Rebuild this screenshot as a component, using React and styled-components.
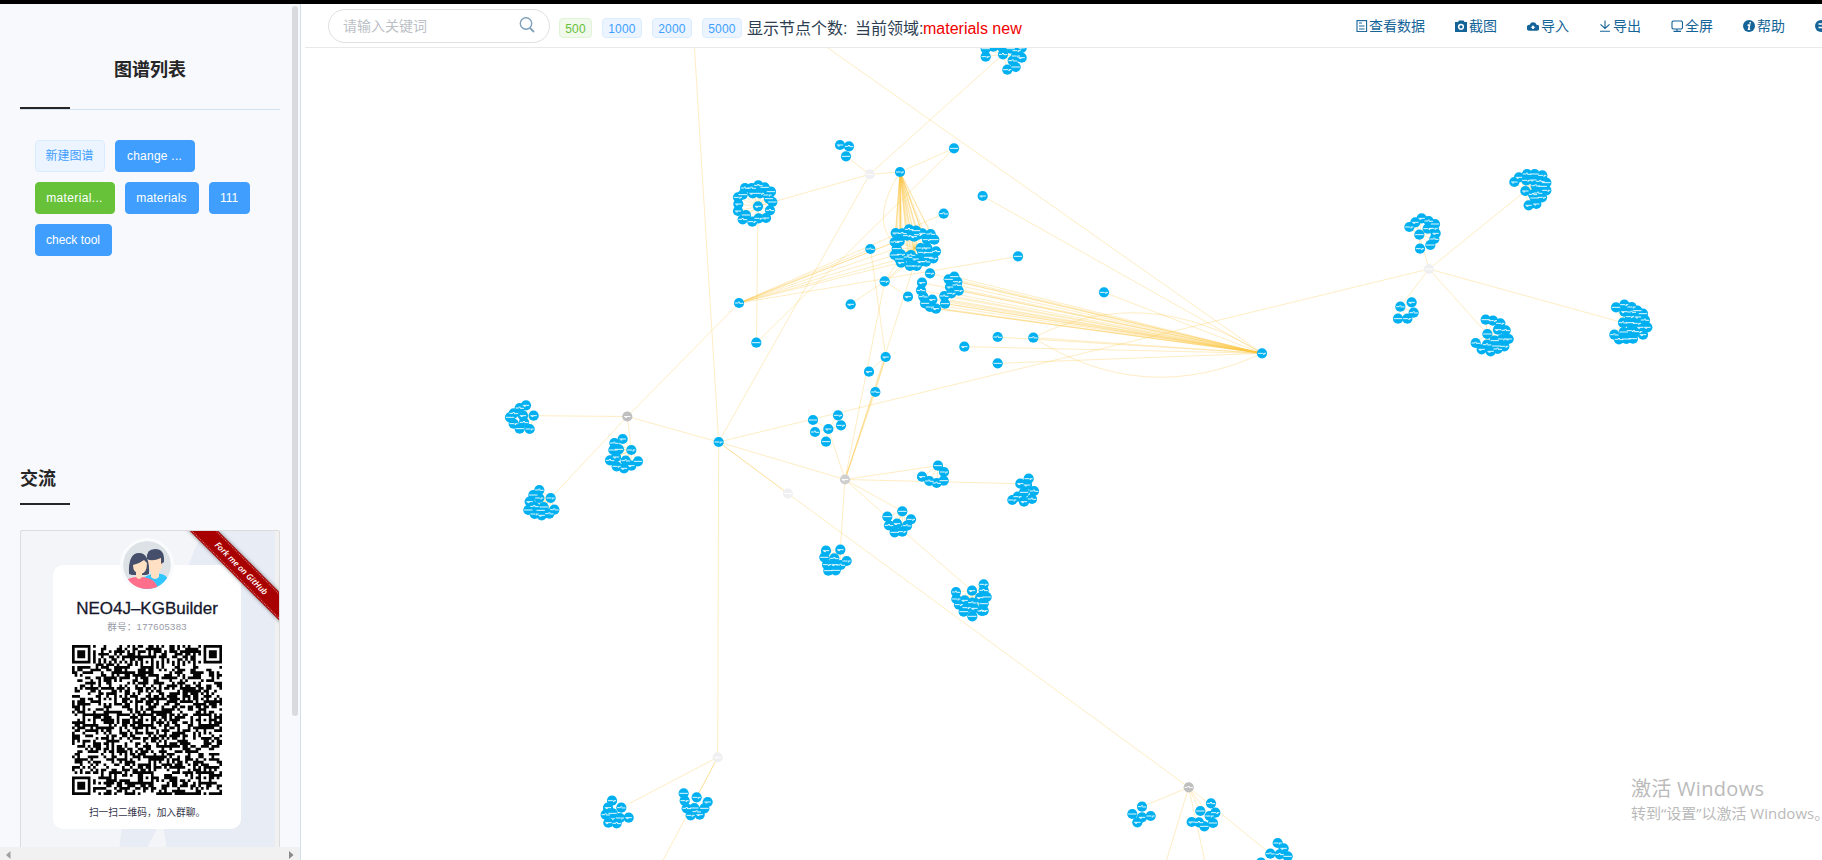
import React from 'react';
import styled, { createGlobalStyle } from 'styled-components';

const Global = createGlobalStyle`
  * { box-sizing: border-box; }
  body { margin: 0; overflow: hidden; background: #fff; font-family: "Liberation Sans", "Noto Sans CJK SC", sans-serif; }
`;

const Page = styled.div`
  display: flex;
  width: 1822px;
  height: 860px;
  border-top: 4px solid #000;
  overflow: hidden;
`;
const Sidebar = styled.aside`
  position: relative;
  flex: 0 0 301px;
  height: 856px;
  border-right: 1px solid #cfdfec;
  background: #f8f9fd;
  overflow: hidden;
`;
const SideContent = styled.div`
  width: 260px;
  margin-left: 20px;
`;
const ListTitle = styled.h2`
  margin: 0;
  height: 106px;
  padding: 52px 0 0;
  border-bottom: 1px solid #d3e2ec;
  text-align: center;
  font-size: 18px;
  line-height: 28px;
  font-weight: 700;
  color: #262626;
`;
const Accent = styled.div`
  width: 50px;
  height: 2px;
  background: #262626;
  margin-top: ${p => p.$lift ? '-3px' : '0'};
  position: relative;
`;
const Domains = styled.div`
  display: flex;
  flex-wrap: wrap;
  align-content: flex-start;
  gap: 10px;
  height: 321px;
  padding: 31px 15px 0;
`;
const tones = {
  plain: ['#ecf5ff', '#d9ecff', '#409eff'],
  blue: ['#409eff', '#409eff', '#fff'],
  green: ['#67c23a', '#67c23a', '#fff'],
  lime: ['#f0f9eb', '#e1f3d8', '#67c23a'],
};
const DomainButton = styled.button`
  width: ${p => p.$w}px;
  height: 32px;
  padding: 0 1px 0 0;
  border: 1px solid ${p => tones[p.$tone][1]};
  border-radius: 4px;
  background: ${p => tones[p.$tone][0]};
  color: ${p => tones[p.$tone][2]};
  font: 12px/30px "Liberation Sans", "Noto Sans CJK SC", sans-serif;
  letter-spacing: ${p => p.$track || 0}px;
  white-space: pre;
`;
const ContactTitle = styled.h2`
  margin: 0;
  height: 73px;
  padding-top: 35px;
  font-size: 18px;
  line-height: 28px;
  color: #262626;
`;
const Poster = styled.div`
  position: relative;
  width: 260px;
  height: 330px;
  margin-top: 25px;
  border: 1px solid #dcdcdc;
  border-radius: 2px;
  background: #f4f5f9;
  overflow: hidden;
`;
const Backdrop = styled.svg`
  position: absolute;
  inset: 0;
`;
const Card = styled.div`
  position: relative;
  display: flex;
  flex-direction: column;
  align-items: center;
  width: 188px;
  height: 264px;
  margin: 34px 0 0 32px;
  border-radius: 10px;
  background: #fff;
`;
const Avatar = styled.svg`
  flex: none;
  margin-top: -27px;
`;
const GroupName = styled.div`
  height: 22px;
  margin-top: 6px;
  font: 17px/22px "Liberation Sans", sans-serif;
  color: #16182c;
  -webkit-text-stroke: 0.3px #16182c;
  white-space: nowrap;
`;
const GroupNo = styled.div`
  height: 14px;
  font: 9.5px/14px "Liberation Sans", "Noto Sans CJK SC", sans-serif;
  letter-spacing: 0.3px;
  color: #999ba6;
  white-space: nowrap;
`;
const Code = styled.svg`
  flex: none;
  margin-top: 11px;
`;
const ScanHint = styled.div`
  margin-top: 10px;
  margin-left: 0;
  font: 9.7px/14px "Noto Sans CJK SC", sans-serif;
  color: #33354a;
  white-space: nowrap;
`;
const Ribbon = styled.div`
  position: absolute;
  left: 139.5px;
  top: 27px;
  width: 160px;
  height: 20px;
  padding: 1px 0;
  background: #a80000;
  box-shadow: 0 0 4px rgba(0, 0, 0, 0.5);
  transform: rotate(45deg);
`;
const RibbonText = styled.div`
  height: 18px;
  padding-left: 1px;
  border: dotted rgba(255, 255, 255, 0.5);
  border-width: 1px 0;
  color: #fff;
  text-align: center;
  font: italic 600 8.4px/16px "Open Sans", sans-serif;
  letter-spacing: -0.05px;
`;
const ThumbV = styled.div`
  position: absolute;
  left: 292px;
  top: 2px;
  width: 6px;
  height: 710px;
  border-radius: 3px;
  background: #d9dade;
`;
const ScrollH = styled.div`
  position: absolute;
  left: 0;
  bottom: 0;
  width: 300px;
  height: 13px;
  padding: 3px 6px 0;
  display: flex;
  align-items: center;
  justify-content: space-between;
  background: #f1f1f1;
`;
const Main = styled.main`
  flex: 1;
  min-width: 0;
  padding-left: 4px;
  display: flex;
  flex-direction: column;
`;
const Toolbar = styled.header`
  flex: 0 0 44px;
  display: flex;
  border-bottom: 1px solid #e9e9e9;
  overflow: hidden;
`;
const Search = styled.label`
  display: flex;
  align-items: center;
  justify-content: space-between;
  flex: none;
  width: 222px;
  height: 34px;
  margin: 5px 9px 0 23px;
  padding: 0 14px 0 14px;
  border: 1px solid #e0e0e0;
  border-radius: 17px;
  font-size: 14px;
  line-height: 20px;
  color: #bcbfc6;
`;
const SearchIcon = styled.svg`
  width: 16px;
  height: 16px;
  margin: -3px 0 0;
  fill: none;
  stroke: #7fa0b8;
  stroke-width: 1.4;
`;
const Tag = styled.span`
  flex: none;
  width: ${p => p.$w}px;
  height: 20px;
  margin: 14px ${p => p.$gap || 10}px 0 0;
  border: 1px solid ${p => tones[p.$tone][1]};
  border-radius: 4px;
  background: ${p => tones[p.$tone][0]};
  color: ${p => tones[p.$tone][2]};
  text-align: center;
  font-size: 12px;
  line-height: 20px;
  letter-spacing: 0.2px;
`;
const Info = styled.div`
  flex: none;
  width: 609px;
  padding-top: 13px;
  display: flex;
  font-size: 16px;
  line-height: 24px;
  color: #2c3e50;
  white-space: pre;
`;
const InfoLabel = styled.span`
  width: ${p => p.$w}px;
`;
const Domain = styled.span`
  color: #f00000;
`;
const Menu = styled.nav`
  display: flex;
  gap: 30px;
  padding-top: 11px;
`;
const MenuItem = styled.a`
  flex: none;
  display: flex;
  align-items: center;
  height: 22px;
  font-size: 14px;
  line-height: 20px;
  color: #156498;
  white-space: nowrap;
`;
const MenuIcon = styled.svg`
  width: 12px;
  height: 12px;
  margin-right: ${p => p.$mr}px;
  fill: none;
  stroke: currentColor;
  stroke-width: 1.1;
`;
const MenuLabel = styled.span`
  margin-top: -1px;
`;
const Canvas = styled.section`
  position: relative;
  flex: 1;
`;
const Graph = styled.svg`
  display: block;
`;
const Watermark = styled.div`
  position: absolute;
  left: 1326px;
  top: 727px;
  color: #bababa;
  font-family: "Open Sans", "Noto Sans CJK SC", sans-serif;
  white-space: nowrap;
`;
const WmTitle = styled.div`
  font-size: 20px;
  line-height: 28px;
  letter-spacing: 0.3px;
`;
const WmText = styled.div`
  font-size: 15px;
  line-height: 20px;
`;

const icons = {
  doc: <><rect x="1" y="0.6" width="9.6" height="11" /><path d="M3 3h3M3 6h5.5M3 9h5.5" /></>,
  camera: <path fill="currentColor" stroke="none" fillRule="evenodd" d="M0 2h3l1-1.500h4.500l1 1.500H12v10H0ZM6 3.700a3.100 3.100 0 1 0 0 6.200a3.100 3.100 0 0 0 0-6.200ZM6 5.200a1.600 1.600 0 1 1 0 3.200a1.600 1.600 0 0 1 0-3.200Z" />,
  cloud: <path fill="currentColor" stroke="none" fillRule="evenodd" d="M2.800 4.700A3.500 3.500 0 0 1 9.500 4.700A3 3 0 0 1 9.400 10.800H2.600A3 3 0 0 1 2.800 4.700ZM6 5.300L3.600 7.800H5.100V9H6.900V7.800H8.400Z" />,
  download: <path d="M6 0.500V8M1.500 4.300L6 8.500l4.500-4.200M1 11.200h10" />,
  screen: <path d="M2 1h8.500l1 1v6l-1 1h-8.500l-1-1V2ZM6 9v2.300M2.500 11.400h7.500" />,
  info: <><circle cx="6" cy="6" r="6" fill="currentColor" stroke="none" /><path stroke="#fff" strokeWidth="1.600" d="M7.300 2.200L7 3.600M4.600 5.100h2L5.600 9.300h1.600" /></>,
  more: <><circle cx="6" cy="6" r="6" fill="currentColor" stroke="none" /><path stroke="#fff" strokeWidth="1.300" d="M3.500 4h5M3.500 7.500h5" /></>,
};
const menu = [['doc', '查看数据'], ['camera', '截图'], ['cloud', '导入'], ['download', '导出'], ['screen', '全屏'], ['info', '帮助'], ['more', '']];

/* Group QR symbol: 57 modules with finder and alignment marks. */
const N = 57;
function ringAt(x, y, cx, cy, r) {
  const d = Math.max(Math.abs(x - cx), Math.abs(y - cy));
  return d > r ? null : d;
}
function moduleOn(x, y, rnd) {
  for (const [cx, cy] of [[3, 3], [53, 3], [3, 53]]) {
    const d = ringAt(x, y, cx, cy, 4);
    if (d !== null) return d !== 4 && d !== 2;
  }
  for (const [cx, cy] of [[28, 6], [6, 28], [28, 28], [50, 28], [28, 50], [50, 50]]) {
    const d = ringAt(x, y, cx, cy, 2);
    if (d !== null) return d !== 1;
  }
  if (x === 6 || y === 6) return (x + y) % 2 === 0;
  return rnd > 0.49;
}
let seed = 177605383;
const random = () => {
  seed = (seed * 1664525 + 1013904223) % 4294967296;
  return seed / 4294967296;
};
let qrPath = '';
for (let y = 0; y < N; y++) for (let x = 0; x < N; x++) if (moduleOn(x, y, random())) qrPath += `M${x} ${y}h1.02v1.02h-1.02z`;

/* Node groups: origin of the group, then node offsets in thirds of a pixel. */
const groups = [
  [720, 40, [[797,26],[797,50],[820,20],[845,20],[849,43],[872,26],[890,32],[905,24],[905,53],[878,62],[887,81],[862,89],[888,48],
    [360,315],[387,319],[378,349],[702,325],[540,396],[788,468],[671,521],[451,627],[894,649],[494,724],[564,770],[392,793],[57,789],[109,908],[1152,757],[630,700]]],
  [720, 40, [[114,499],[115,436],[134,442],[153,455],[120,460],[98,460],[75,444],[95,444],[68,464],[54,472],[55,492],[54,513],[68,538],[78,525],[97,545],[116,535],[138,534],[150,511],[157,486],[147,476],[143,465]]],
  [720, 40, [[527,579],[547,580],[567,568],[588,572],[562,587],[582,590],[607,580],[632,582],[643,599],[621,599],[595,584],[539,604],[524,606],[530,626],[524,645],[543,643],[543,668],[564,651],[573,645],[570,678],[590,678],[587,657],[602,665],[618,665],[625,652],[640,655],[602,624],[622,624],[648,634],[626,638],[538,657],[607,637]]],
  [720, 40, [[606,728],[603,751],[610,770],[615,790],[630,801],[648,806],[637,779],[673,768],[675,791],[694,760],[716,752],[690,741],[710,735],[686,718],[703,710],[712,725]]],
  [780, 300, [[553,140],[653,111],[760,113],[653,190],[1446,160],[317,171],[267,215],[286,276],[99,360],[174,346],[183,376],[145,387],[105,396],[138,425]]],
  [780, 300, [[474,497],[492,516],[426,530],[448,543],[470,549],[491,542],[746,536],[721,551],[741,555],[762,573],[732,577],[713,590],[697,600],[732,605],[756,597]]],
  [780, 300, [[367,634],[322,650],[393,658],[351,671],[327,676],[381,677],[344,697],[367,695],[181,749],[138,752],[163,775],[133,772],[200,783],[141,794],[164,794],[182,795],[145,812],[167,811]]],
  [780, 300, [[611,853],[576,872],[528,876],[611,871],[620,891],[529,897],[554,901],[600,893],[577,908],[611,911],[537,914],[560,923],[583,925],[605,933],[551,935],[577,949],[611,932]]],
  [490, 380, [[108,76],[89,84],[71,100],[60,112],[71,131],[99,107],[131,107],[102,127],[89,146],[119,147],[686,186]]],
  [490, 380, [[398,177],[373,189],[370,210],[387,208],[424,210],[378,231],[360,241],[407,242],[444,244],[380,259],[402,265],[424,257],[148,330],[130,345],[148,354],[182,354],[119,365],[133,379],[161,381],[115,390],[134,402],[155,406],[178,401],[193,389],[152,391]]],
  [1370, 150, [[118,231],[136,217],[155,205],[176,213],[195,222],[173,236],[191,235],[197,250],[193,267],[181,285],[148,254],[150,296],[125,457],[91,470],[131,488],[84,506],[112,506]]],
  [1370, 150, [[433,96],[447,82],[471,72],[494,72],[517,76],[469,91],[490,90],[511,94],[529,98],[518,109],[529,121],[466,123],[489,133],[504,129],[494,144],[516,142],[476,166],[499,162],[497,107]]],
  [1370, 150, [[347,509],[369,512],[391,520],[384,539],[407,541],[352,552],[374,572],[396,567],[416,567],[317,579],[351,584],[379,588],[403,589],[335,598],[362,604],[383,597],[738,472],[763,464],[785,471],[763,485],[785,486],[802,482],[819,491],[780,500],[804,501],[825,510],[759,518],[780,518],[801,520],[811,532],[832,532],[733,554],[761,546],[783,542],[805,545],[819,554],[747,568],[769,567],[789,566]]],
  [590, 740, [[66,182],[54,203],[94,203],[47,224],[68,220],[90,234],[116,233],[55,248],[80,250],[281,160],[284,182],[320,172],[353,186],[290,205],[313,204],[343,205],[302,226],[329,224],[320,215]]],
  [1110, 770, [[96,110],[67,132],[122,138],[96,142],[82,157],[303,100],[271,123],[316,128],[299,138],[245,156],[267,157],[309,159],[283,169],[503,219],[521,235],[481,251],[509,253],[533,259],[453,278]]],
];
const nodes = groups.flatMap(([ox, oy, pts]) => pts.map(([x, y]) => [ox + x / 3, oy + y / 3]));
const greys = [[627.3, 416.5, '#bfbfbf'], [845, 479.5, '#cfcfcf'], [1188.7, 787.3, '#bfbfbf'], [869.7, 174.3, '#f0f0f2'], [787.8, 493.5, '#f0f0f2'], [1429, 269, '#f0f0f0'], [717.7, 757.3, '#f0f0f2']];

const A = [718.7, 442], G = [627.3, 416.5], W = [869.7, 174.3], B = [900, 172], C = [787.8, 493.5], D = [845, 479.5];
const E = [1262, 353.3], F = [1429, 269], H = [717.7, 757.3], I = [1188.7, 787.3], K = [884.7, 281.3], P = [739, 303], Q = [885.7, 357], L = [758, 206.3];
const at = group => groups[group][2].map(([x, y]) => [groups[group][0] + x / 3, groups[group][1] + y / 3]);
const fan = (from, list) => list.map(to => [from, to]);
const links = [
  [[694, 40], A], [[816.5, 40], E], ...fan(W, [[1003, 54.3], A, B, [846, 156.5], L]),
  ...fan(B, [[954, 148.3]]), [[954, 148.3], [756.5, 342.7]], [L, [756.5, 342.7]],
  ...fan(B, [...at(2).slice(0, 24), [900, 245], [900, 245], [901, 240], [925, 240], [925, 240]]),
  ...fan(K, [[851, 304], [908, 296.5], D, [900, 258], [910, 258], [905, 266]]),
  ...fan(P, [[943.7, 213.7], [1018, 256.5], G, [870.5, 249], [895, 242], [900, 247], [895, 255], [900, 259], [903, 262], [895, 242]]),
  [[870.5, 249], Q], [[915, 262], D], ...fan(Q, [D, D, [869, 371.7], [875.3, 392]]), [[875.3, 392], D],
  ...fan(E, [[997.7, 337], [1033.3, 337.7], [964.3, 346.7], [997.7, 363.3], [1104, 292.3], [982.7, 196], [930, 273.3], ...at(3), [945, 303.7], [935.7, 308.7], [950, 300]]),
  ...fan(A, [F, G, D, C, C, H]), [C, I],
  ...fan(G, [[533.7, 415.7], [550.7, 498], [631.3, 450]]),
  ...fan(D, [[840.3, 549.7], [902.3, 511.3], [887, 516.7], [938, 465.7], [1020.3, 483.7], [828.3, 429]]), [[902, 530], [972, 590.7]],
  ...fan(F, [[1525.3, 191], [1419.3, 234.7], [1400.3, 306.7], [1487.3, 334], [1623, 322.7]]),
  ...fan(H, [[621.3, 807.7], [696.7, 797.3], [661, 864]]),
  ...fan(I, [[1142, 806.7], [1166, 862], [1205, 862], [1209, 816], [1200, 811], [1270.3, 853.7]]),
  ...fan(L, at(1)), ...fan([828.3, 429], at(4).slice(8)), ...fan([938, 465.7], at(5).slice(1, 6)), ...fan([1024, 492.3], at(5).slice(6)),
  ...fan([902.3, 511.3], at(6).slice(1, 8)), ...fan([840.3, 549.7], at(6).slice(9)), ...fan([972, 590.7], at(7)),
  ...fan([533.7, 415.7], at(8).slice(0, 10)), ...fan([631.3, 450], at(9).slice(0, 12)), ...fan([550.7, 498], at(9).slice(12)),
  ...fan([1419.3, 234.7], at(10).slice(0, 12)), ...fan([1400.3, 306.7], at(10).slice(12)), ...fan([1525.3, 191], at(11)),
  ...fan([1487.3, 334], at(12).slice(0, 16)), ...fan([1623, 322.7], at(12).slice(16)), ...fan([1003, 54.3], at(0).slice(0, 13)),
  ...fan([915, 248], at(2)),
];
const captions = ['M-4.200 0h8.400', 'M-4.200 0h3.500m1 .3h4M-1-.8h2', 'M-3.200 0h6.400M-2.200.9h2', 'M-4.200 0h5m.700 0h2.500M1 .9h1.500'];

export default function App() {
  return (
    <Page>
      <Global />
      <Sidebar>
        <SideContent>
          <ListTitle>图谱列表</ListTitle>
          <Accent $lift />
          <Domains>
            <DomainButton $tone="plain" $w={70}>新建图谱</DomainButton>
            <DomainButton $tone="blue" $w={80} $track={0.25}>change ...</DomainButton>
            <DomainButton $tone="green" $w={80} $track={0.35}>material...</DomainButton>
            <DomainButton $tone="blue" $w={74} $track={0.2}>materials</DomainButton>
            <DomainButton $tone="blue" $w={41}>111</DomainButton>
            <DomainButton $tone="blue" $w={77}>check tool</DomainButton>
          </Domains>
          <ContactTitle>交流</ContactTitle>
          <Accent />
          <Poster>
            <Backdrop width="258" height="328">
              <path d="M182 0Q154 60 146 110Q110 210 97 328H122Q128 310 141 290Q145 310 147 328H258V0Z" fill="#e8ecf5" />
              <path d="M254 0h4v328h-4z" fill="#f1f1f1" />
            </Backdrop>
            <Card>
              <Avatar width="54" height="54" viewBox="-27 -27 54 54">
                <clipPath id="face"><circle r="24" /></clipPath>
                <circle r="27" fill="#fafbfc" />
                <g clipPath="url(#face)">
                  <circle r="24" fill="#dde2e6" />
                  <path d="M-5 24V14Q1 9 8 9Q18 8 21 14V24Z" fill="#30c5ff" />
                  <path d="M4 3h8v9q-4 4-8 0Z" fill="#ffe0c2" />
                  <ellipse cx="8" cy="-2" rx="7.500" ry="10" fill="#ffe0c2" />
                  <path d="M0-6Q-1-16 8-16Q18-16 17-3L14-1V-7Q5-3 0-6Z" fill="#454f6b" />
                  <path d="M-18 9Q-19-12-8-12Q3-12 2 9L-1 10H-15Z" fill="#454f6b" />
                  <path d="M-11 6h6v9h-6z" fill="#ffe0c2" />
                  <path d="M-14 0Q-8-1-3-5L0-2Q0 9-7 9Q-14 8-14 0Z" fill="#ffe0c2" />
                  <path d="M-21 24V15Q-15 12-11 12Q-8 16-5 12Q9 13 11 24Z" fill="#ff6f8b" />
                </g>
              </Avatar>
              <GroupName>NEO4J–KGBuilder</GroupName>
              <GroupNo>群号：177605383</GroupNo>
              <Code width="150" height="150" viewBox="0 0 57 57"><path d={qrPath} fill="#050505" /></Code>
              <ScanHint>扫一扫二维码，加入群聊。</ScanHint>
            </Card>
            <Ribbon><RibbonText>Fork me on GitHub</RibbonText></Ribbon>
          </Poster>
        </SideContent>
        <ThumbV />
        <ScrollH>
          <svg width="5" height="8"><path d="M4.500 0v8L0 4z" fill="#a0a0a0" /></svg>
          <svg width="5" height="8"><path d="M0 0v8l4.500-4z" fill="#8a8a8a" /></svg>
        </ScrollH>
      </Sidebar>
      <Main>
        <Toolbar>
          <Search>
            请输入关键词
            <SearchIcon viewBox="0 0 16 16"><circle cx="7" cy="6.500" r="5.700" /><path d="M11 11l4 4" strokeWidth="1.800" /></SearchIcon>
          </Search>
          <Tag $tone="lime" $w={33}>500</Tag>
          <Tag $tone="plain" $w={40}>1000</Tag>
          <Tag $tone="plain" $w={40}>2000</Tag>
          <Tag $tone="plain" $w={40} $gap={5}>5000</Tag>
          <Info>
            <InfoLabel $w={108}>显示节点个数:</InfoLabel>
            <InfoLabel $w={68}>当前领域:</InfoLabel>
            <Domain>materials new</Domain>
          </Info>
          <Menu>
            {menu.map(([icon, label]) => (
              <MenuItem key={icon}><MenuIcon viewBox="0 0 12 12" $mr={icon === 'doc' ? 1 : 2}>{icons[icon]}</MenuIcon><MenuLabel>{label}</MenuLabel></MenuItem>
            ))}
          </Menu>
        </Toolbar>
        <Canvas>
          <Graph width="1517" height="812" viewBox="305 48 1517 812">
            <g fill="none" stroke="#fdc23c" strokeOpacity="0.3" strokeWidth="1">
              {links.map(([a, b], i) => <path key={i} d={`M${a}L${b}`} />)}
              <path d="M900 172Q872 216 891 240" />
              <path d="M1033.300 337.700Q1145 281 1262 353.300M1033.300 337.700Q1145 408 1262 353.300" />
            </g>
            <g fill="#00b0f0">
              {nodes.map(([x, y], i) => <circle key={i} cx={x} cy={y} r="5.100" />)}
              {greys.map(([x, y, c]) => <circle key={x} cx={x} cy={y} r="5.100" fill={c} />)}
            </g>
            <g fill="none" stroke="#fff" strokeWidth="0.900">
              {[...nodes, ...greys].map(([x, y], i) => <path key={i} transform={`translate(${x} ${y})`} d={captions[(i * 7 + (i >> 2)) % 4]} />)}
            </g>
          </Graph>
          <Watermark>
            <WmTitle>激活 Windows</WmTitle>
            <WmText>转到“设置”以激活 Windows。</WmText>
          </Watermark>
        </Canvas>
      </Main>
    </Page>
  );
}
